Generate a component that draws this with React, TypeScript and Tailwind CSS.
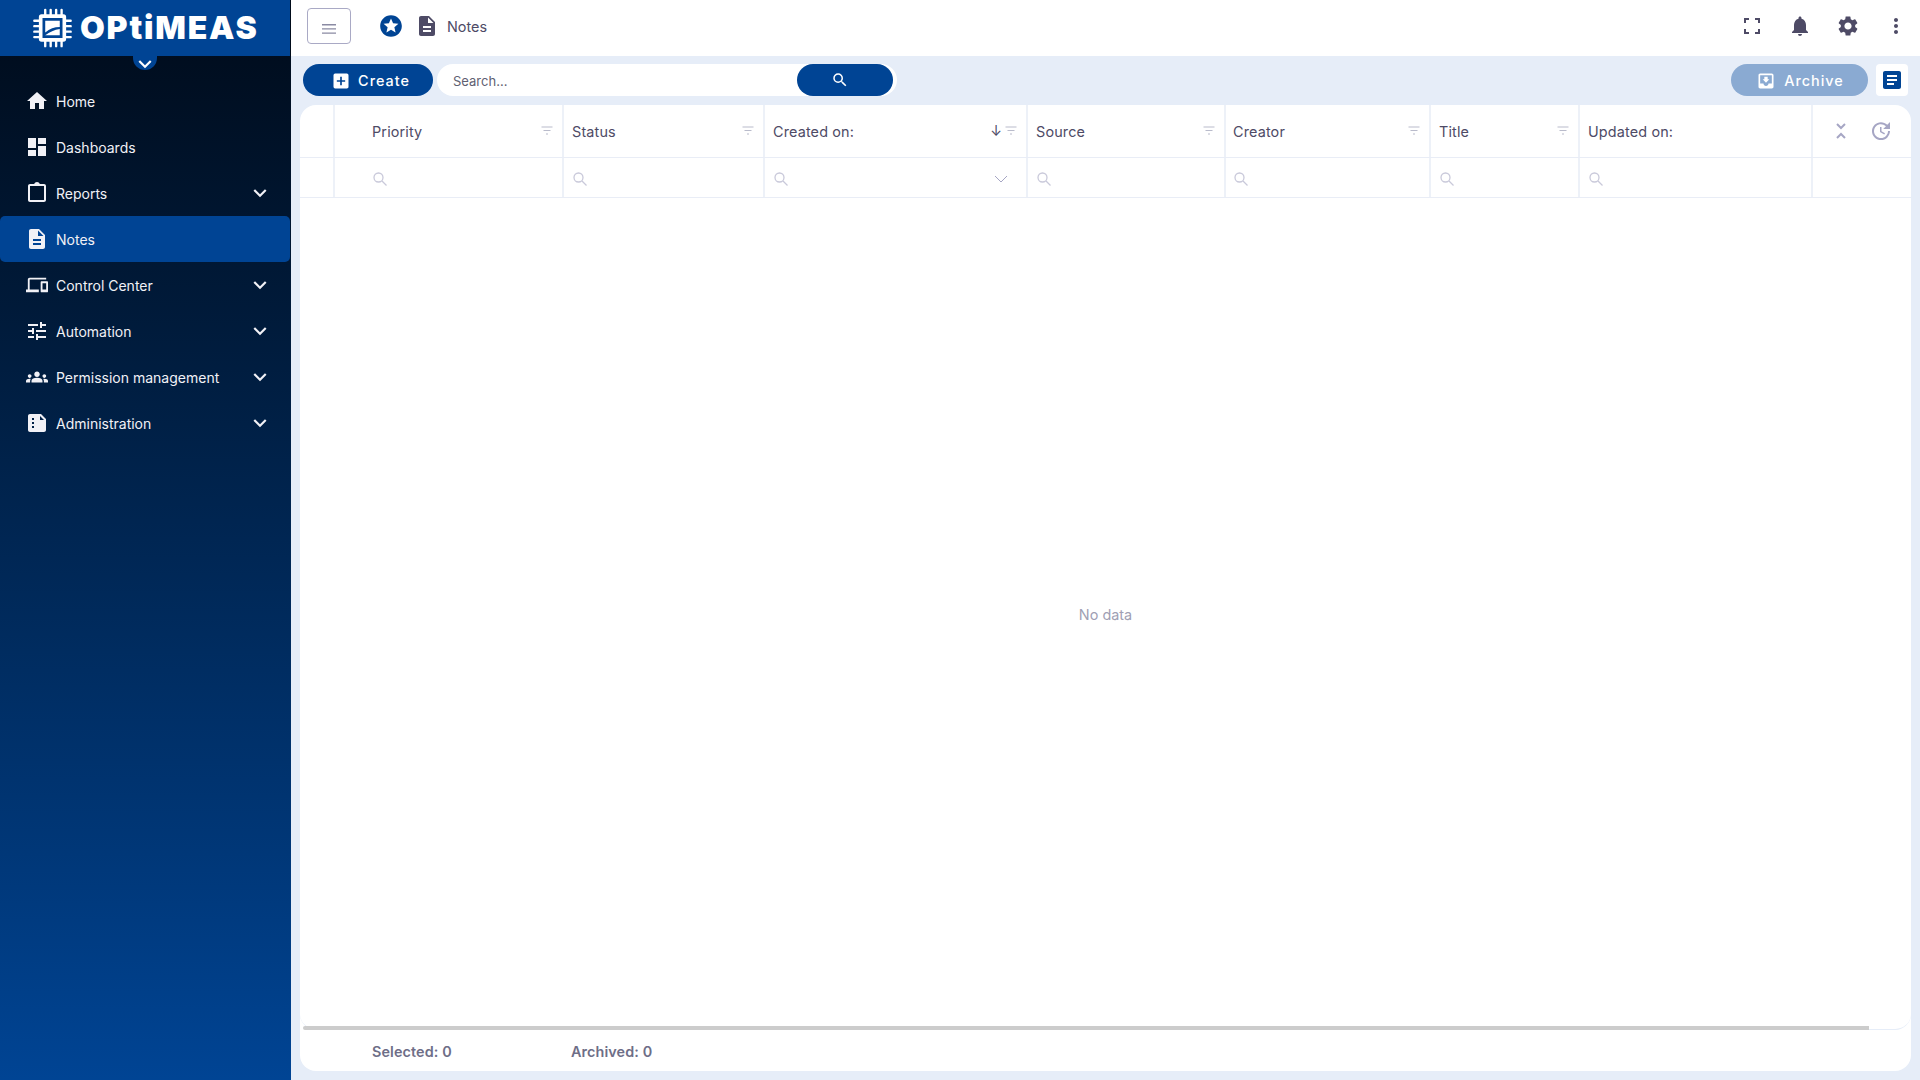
import React from 'react';
import {
  MdHome, MdDashboard, MdDescription, MdDevices, MdTune, MdGroups, MdKeyboardArrowDown,
  MdStars, MdNotifications, MdSettings, MdMoreVert, MdSearch, MdUpdate, MdArticle,
  MdMoveToInbox, MdAddBox,
} from 'react-icons/md';

const font = { fontFamily: 'Inter, sans-serif' };

const ClipboardIcon = ({ size = 24 }: { size?: number }) => (
  <svg width={size} height={size} viewBox="0 0 24 24" fill="currentColor">
    <path d="M19 3h-4.18C14.4 1.84 13.3 1 12 1s-2.4.84-2.82 2H5c-1.1 0-2 .9-2 2v14c0 1.1.9 2 2 2h14c1.1 0 2-.9 2-2V5c0-1.1-.9-2-2-2zm0 16H5V5h14v14z" />
  </svg>
);

const AdminIcon = ({ size = 24 }: { size?: number }) => (
  <svg width={size} height={size} viewBox="0 0 24 24" fill="currentColor">
    <path d="M16 3H5c-1.1 0-2 .9-2 2v14c0 1.1.9 2 2 2h14c1.1 0 2-.9 2-2V8l-5-5zM7 7h2v2H7V7zm0 4h2v2H7v-2zm0 4h2v2H7v-2zm8-6V5l4 4h-4z" />
  </svg>
);

const ChipLogo = () => (
  <svg width="41" height="40" viewBox="0 0 44 44" className="shrink-0">
    <g stroke="#fff" strokeWidth="2.6" strokeLinecap="round">
      <path d="M14 2v8M20 2v8M26 2v8M32 2v8M14 34v8M20 34v8M26 34v8M32 34v8" />
      <path d="M2 14h8M2 20h8M2 26h8M2 32h8M34 14h8M34 20h8M34 26h8M34 32h8" />
    </g>
    <rect x="7" y="7" width="30" height="30" rx="3" fill="#fff" />
    <rect x="11" y="11" width="22" height="22" fill="#004494" />
    <path d="M14 14h16v7c-6 0-11 2-16 6z" fill="#fff" />
    <path d="M14 30c5-4 10-6 16-7v7z" fill="#fff" />
  </svg>
);

const FilterGlyph = () => (
  <svg width="12" height="10" viewBox="0 0 12 10" className="text-[#b9bbcb]" fill="none" stroke="currentColor" strokeWidth="1">
    <path d="M0.5 1h11M2.5 4.5h7M5 8h2" />
  </svg>
);

const navItems = [
  { label: 'Home', icon: <MdHome size={24} /> },
  { label: 'Dashboards', icon: <MdDashboard size={24} /> },
  { label: 'Reports', icon: <ClipboardIcon />, arrow: true },
  { label: 'Notes', icon: <MdDescription size={24} />, active: true },
  { label: 'Control Center', icon: <MdDevices size={22} />, arrow: true },
  { label: 'Automation', icon: <MdTune size={24} />, arrow: true },
  { label: 'Permission management', icon: <MdGroups size={22} />, arrow: true },
  { label: 'Administration', icon: <AdminIcon />, arrow: true },
];

const columns = [
  { label: 'Priority', width: 'w-[229px]', pad: 'pl-[37px]', filter: true },
  { label: 'Status', width: 'w-[201px]', filter: true },
  { label: 'Created on:', width: 'w-[263px]', filter: true, sorted: true },
  { label: 'Source', width: 'w-[198px]', filter: true },
  { label: 'Creator', width: 'w-[205px]', pad: 'pl-[7px]', filter: true },
  { label: 'Title', width: 'w-[149px]', filter: true },
  { label: 'Updated on:', width: 'w-[233px]' },
];

export default function App() {
  return (
    <div className="flex h-screen w-full overflow-hidden bg-[#e6edf8] text-[#4e4b66]" style={font}>
      <aside className="flex w-[291px] shrink-0 flex-col bg-gradient-to-b from-[#000b1a] to-[#004494]">
        <div className="flex h-14 items-center gap-[7px] border-r border-[#000b1a] bg-[#004494] pl-[32px] text-white">
          <ChipLogo />
          <span className="text-[32px] leading-none font-black tracking-[1.8px]">OPtiMEAS</span>
        </div>
        <div className="relative">
          <div className="absolute left-[133px] top-0 flex h-[14px] w-6 items-start justify-center rounded-b-full bg-[#004494] text-white">
            <MdKeyboardArrowDown size={26} className="-mt-[5px] shrink-0" />
          </div>
        </div>
        <nav className="flex flex-col pt-[22px]">
          {navItems.map((item) => (
            <div
              key={item.label}
              className={`flex h-[46px] items-center pl-[25px] pr-[18px] text-[14px] text-[#f1f1f6] ${item.active ? 'mr-[1px] rounded-[5px] bg-[#004494]' : ''}`}
            >
              <span className="flex w-[24px] justify-center">{item.icon}</span>
              <span className="ml-[7px] flex-1">{item.label}</span>
              {item.arrow && <MdKeyboardArrowDown size={26} />}
            </div>
          ))}
        </nav>
      </aside>

      <main className="flex min-w-0 flex-1 flex-col">
        <header className="flex h-14 shrink-0 items-center bg-white pb-[4px] pl-[16px] pr-[12px]">
          <button className="flex h-[36px] w-[44px] items-center justify-center rounded-[4px] border border-[#a9a9c5]">
            <svg width="16" height="12" viewBox="0 0 16 12" fill="#8a8aa3" className="mt-[6px]"><path d="M1 1h14v1.4H1zM1 5.2h14v1.4H1zM1 9.4h14v1.4H1z" /></svg>
          </button>
          <MdStars size={26} className="ml-[27px] text-[#004494]" />
          <MdDescription size={24} className="ml-[11px] text-[#4e4b66]" />
          <span className="ml-[8px] pt-[2px] text-[14.4px]">Notes</span>
          <div className="ml-auto flex items-center">
            <svg width="24" height="24" viewBox="0 0 24 24" fill="none" stroke="currentColor" strokeWidth="2"><path d="M5 9V5h4M15 5h4v4M19 15v4h-4M9 19H5v-4" /></svg>
            <MdNotifications size={24} className="ml-[24px]" />
            <MdSettings size={24} className="ml-[24px]" />
            <MdMoreVert size={24} className="ml-[24px]" />
          </div>
        </header>

        <div className="flex h-[49px] shrink-0 items-start px-[12px] pt-[8px]">
          <button className="flex h-[32px] w-[130px] items-center justify-center gap-[7px] rounded-full bg-[#004494] pl-[5px] pt-[1px] text-[14.4px] font-medium tracking-[1px] text-white">
            <MdAddBox size={20} />
            Create
          </button>
          <div className="ml-[4px] flex h-[32px] w-[460px] items-center rounded-full bg-white pr-[4px]">
            <span className="flex-1 pl-[16px] pt-[3px] text-[13px] text-[#5f5f72]">Search...</span>
            <span className="flex h-[32px] w-[96px] items-center justify-center rounded-full bg-[#004494] pr-[10px] text-white">
              <MdSearch size={18} />
            </span>
          </div>
          <button className="ml-auto flex h-[32px] w-[137px] items-center justify-center gap-[8px] rounded-full bg-[#8aaad2] pt-[1px] pl-[1px] text-[14.4px] font-medium tracking-[1px] text-white">
            <MdMoveToInbox size={20} />
            Archive
          </button>
          <span className="ml-[8px] flex h-[32px] w-[32px] items-center justify-center rounded-[4px] bg-white text-[#004494]">
            <MdArticle size={24} />
          </span>
        </div>

        <div className="mr-[9px] ml-[9px] flex flex-1 flex-col rounded-[16px] bg-white">
          <div className="relative flex flex-1 flex-col rounded-[16px] border-b border-[#e6edf8]">
            <div className="flex h-[53px] border-b border-[#e9edf6]">
              <div className="w-[35px] border-r-2 border-[#edf1f8]" />
              {columns.map((c) => (
                <div key={c.label} className={`${c.width} flex items-center justify-between border-r-2 border-[#edf1f8] ${c.pad ?? 'pl-[8px]'} pr-[9px] text-[14.4px] tracking-[0.15px]`}>
                  <span className="pt-[2px]">{c.label}</span>
                  <span className="flex items-center gap-[3px]">
                    {c.sorted && <span className="text-[14px] leading-none">↓</span>}
                    {c.filter && <FilterGlyph />}
                  </span>
                </div>
              ))}
              <div className="flex flex-1 items-center justify-end gap-[23px] pr-[18px] text-[#a6a6c4]">
                <svg width="10" height="16" viewBox="0 0 10 16" fill="none" stroke="currentColor" strokeWidth="2"><path d="M1 1l4 4 4-4M1 15l4-4 4 4" /></svg>
                <MdUpdate size={24} />
              </div>
            </div>
            <div className="flex h-[40px] border-b border-[#e9edf6]">
              <div className="w-[35px] border-r-2 border-[#edf1f8]" />
              {columns.map((c) => (
                <div key={c.label} className={`${c.width} flex items-center justify-between border-r-2 border-[#edf1f8] ${c.pad ?? 'pl-[8px]'} pr-[18px] pt-[2px] text-[#c9c9da]`}>
                  <svg width="16" height="16" viewBox="0 0 16 16" fill="none" stroke="currentColor" strokeWidth="1.3"><circle cx="6.5" cy="6.5" r="4.5" /><path d="M10 10l4.5 4.5" /></svg>
                  {c.sorted && (
                    <svg width="14" height="8" viewBox="0 0 14 8" fill="none" stroke="#a6a6c4" strokeWidth="1"><path d="M1 1l6 6 6-6" /></svg>
                  )}
                </div>
              ))}
              <div className="flex-1" />
            </div>
            <div className="flex flex-1 items-center justify-center pt-[2px] text-[14.4px] text-[#a0a0b4]">No data</div>
            <div className="absolute bottom-[-1px] left-[3px] h-[4px] w-[1566px] rounded-l-full bg-[#cccccc]" />
          </div>
          <div className="flex h-[41px] items-center rounded-b-[16px] pl-[72px] pt-[2px] text-[14.4px] font-semibold tracking-[0.1px] text-[#6e6e87]">
            <span className="w-[199px]">Selected: 0</span>
            <span>Archived: 0</span>
          </div>
        </div>
        <div className="h-[9px] shrink-0" />
      </main>
    </div>
  );
}
